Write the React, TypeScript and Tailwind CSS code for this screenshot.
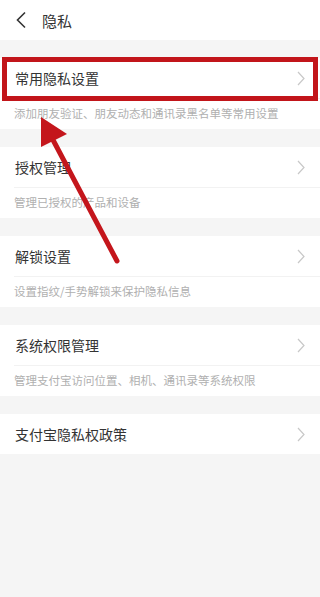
import React from "react"

interface PrivacyItem {
  title: string
  desc?: string
}

const items: PrivacyItem[] = [
  { title: "常用隐私设置", desc: "添加朋友验证、朋友动态和通讯录黑名单等常用设置" },
  { title: "授权管理", desc: "管理已授权的产品和设备" },
  { title: "解锁设置", desc: "设置指纹/手势解锁来保护隐私信息" },
  { title: "系统权限管理", desc: "管理支付宝访问位置、相机、通讯录等系统权限" },
  { title: "支付宝隐私权政策" },
]

const Chevron = () => (
  <svg width="8" height="15" viewBox="0 0 8 15" fill="none" className="shrink-0">
    <path d="M1 1l6 6.5L1 14" stroke="#c8c8c8" strokeWidth="1.2" />
  </svg>
)

export default function App() {
  return (
    <div
      className="relative w-full min-h-[597px] bg-[#f5f5f5] overflow-hidden"
      style={{ fontFamily: '"Noto Sans CJK SC", "Noto Sans", sans-serif' }}
    >
      {/* Header */}
      <div className="h-[40px] bg-white flex items-center">
        <svg width="12" height="18" viewBox="0 0 12 18" fill="none" className="ml-[15px]">
          <path d="M10 1.5L2.5 9l7.5 7.5" stroke="#333" strokeWidth="1.6" />
        </svg>
        <span className="ml-[15px] text-[15px] text-[#333] leading-none">隐私</span>
      </div>

      {/* List sections */}
      {items.map((item) => (
        <div key={item.title} className="mt-[18px] bg-white">
          <div className="h-[40px] flex items-center justify-between pl-[15px] pr-[15px]">
            <span className="text-[14px] text-[#333] leading-none">{item.title}</span>
            <Chevron />
          </div>
          {item.desc && (
            <>
              <div className="ml-[14px] h-px bg-[#f2f2f2]" />
              <div className="h-[30px] flex items-center pl-[14px]">
                <span className="text-[11.5px] text-[#b0b0b0] leading-none">{item.desc}</span>
              </div>
            </>
          )}
        </div>
      ))}

      {/* Annotation: highlight box */}
      <div className="absolute left-[2px] top-[57px] w-[316px] h-[44px] border-[5px] border-[#c2151a] pointer-events-none" />

      {/* Annotation: arrow */}
      <svg
        className="absolute left-0 top-0 pointer-events-none"
        width="320"
        height="597"
        viewBox="0 0 320 597"
      >
        <line x1="117" y1="261" x2="52" y2="138" stroke="#c4161c" strokeWidth="5" strokeLinecap="round" />
        <polygon points="41,117 67,134 41,147" fill="#c4161c" />
      </svg>
    </div>
  )
}
